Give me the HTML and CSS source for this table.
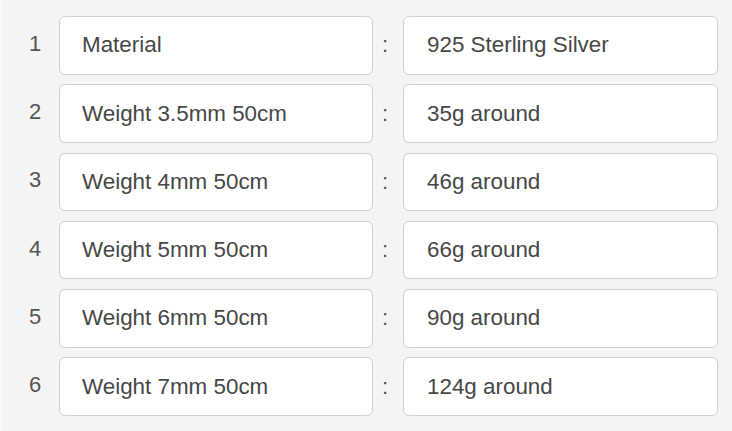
FILE: index.html
```html
<!DOCTYPE html>
<html>
<head>
<meta charset="utf-8">
<link rel="stylesheet" href="styles.css">
</head>
<body>
<div class="page">
  <div class="row"><span class="num">1</span><div class="cell">Material</div><span class="colon">:</span><div class="cell value">925 Sterling Silver</div></div>
  <div class="row"><span class="num">2</span><div class="cell">Weight 3.5mm 50cm</div><span class="colon">:</span><div class="cell value">35g around</div></div>
  <div class="row"><span class="num">3</span><div class="cell">Weight 4mm 50cm</div><span class="colon">:</span><div class="cell value">46g around</div></div>
  <div class="row"><span class="num">4</span><div class="cell">Weight 5mm 50cm</div><span class="colon">:</span><div class="cell value">66g around</div></div>
  <div class="row"><span class="num">5</span><div class="cell">Weight 6mm 50cm</div><span class="colon">:</span><div class="cell value">90g around</div></div>
  <div class="row"><span class="num">6</span><div class="cell">Weight 7mm 50cm</div><span class="colon">:</span><div class="cell value">124g around</div></div>
</div>
</body>
</html>
```

FILE: styles.css
```css
html, body {
  margin: 0;
  padding: 0;
  background: #f4f4f4;
}
body {
  font-family: "Liberation Sans", Arial, sans-serif;
  color: #444;
  height: 431px;
  overflow: hidden;
}
.page {
  border-left: 2px solid #fafafa;
  padding: 16px 14px 0 0;
  display: flex;
  flex-direction: column;
  gap: 9.7px;
  min-height: 415px;
}
.row {
  display: grid;
  grid-template-columns: 57px 314px 30px 315px;
  align-items: center;
  height: 58.6px;
}
.num {
  font-size: 22px;
  color: #555;
  padding-left: 27px;
  margin-top: -3px;
}
.colon {
  font-size: 22px;
  color: #555;
  padding-left: 9px;
}
.cell {
  box-sizing: border-box;
  height: 58.6px;
  background: #fff;
  border: 1px solid #d0d0d0;
  border-radius: 6px;
  display: flex;
  align-items: center;
  padding-left: 22px;
  font-size: 22.4px;
  color: #474747;
}
.value {
  padding-left: 23px;
}
```
